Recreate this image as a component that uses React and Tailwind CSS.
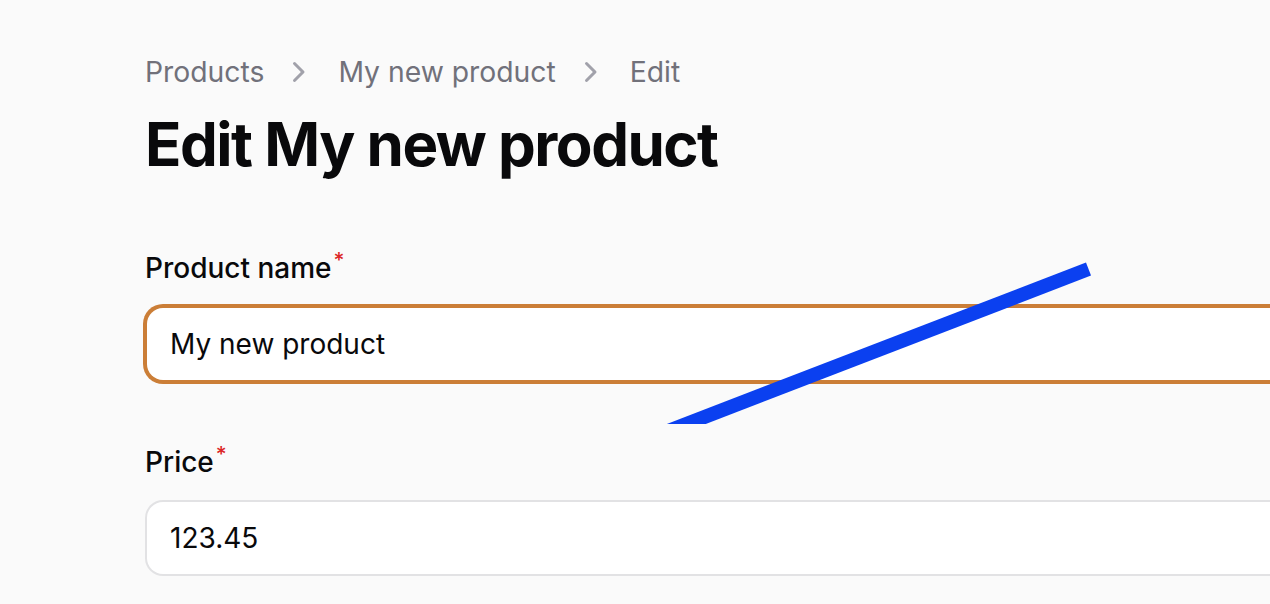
import React from 'react';

function Chevron() {
  return (
    <svg viewBox="0 0 20 20" fill="currentColor" className="w-[40px] h-[40px] ml-[13px] mr-[21px] text-[#a1a1aa]">
      <path
        fillRule="evenodd"
        clipRule="evenodd"
        d="M8.22 5.22a.75.75 0 0 1 1.06 0l4.25 4.25a.75.75 0 0 1 0 1.06l-4.25 4.25a.75.75 0 0 1-1.06-1.06L11.94 10 8.22 6.28a.75.75 0 0 1 0-1.06Z"
      />
    </svg>
  );
}

function Field({ label, value, focused }) {
  return (
    <div className="flex flex-col gap-[16px]">
      <label className="text-[28px] leading-[48px] font-medium text-[#09090b]">
        {label}
        <sup className="text-[#dc2626] font-medium ml-[2px]">*</sup>
      </label>
      <div
        className={
          focused
            ? 'ml-[2px] w-[1200px] h-[72px] bg-white rounded-[16px] shadow-[0_0_0_4px_#cb7e37] flex items-center px-[24px]'
            : 'ml-[2px] w-[1200px] h-[72px] bg-white rounded-[16px] shadow-[0_0_0_2px_#e2e2e4] flex items-center px-[24px]'
        }
      >
        <input
          readOnly
          value={value}
          className="w-full bg-transparent outline-none text-[28px] text-[#09090b] -ml-[1px]"
        />
      </div>
    </div>
  );
}

export default function App() {
  return (
    <div
      className="relative w-[1270px] h-[604px] overflow-hidden bg-[#fafafa]"
      style={{ fontFamily: 'Inter, "Noto Sans", sans-serif' }}
    >
      <div className="pl-[145px] pt-[52px]">
        <nav className="flex items-center text-[28.3px] leading-[40px] text-[#71717a]">
          <span>Products</span>
          <Chevron />
          <span>My new product</span>
          <Chevron />
          <span>Edit</span>
        </nav>
        <h1 className="mt-[16px] text-[60px] leading-[72px] font-bold tracking-tight text-[#09090b]">
          Edit My new product
        </h1>

        <div className="mt-[64px] flex flex-col gap-[58px]">
          <Field label="Product name" value="My new product" focused />
          <Field label="Price" value="123.45" />
        </div>
      </div>

      {/* annotation stroke over the form */}
      <svg className="absolute left-0 top-0 pointer-events-none" width="1270" height="424" viewBox="0 0 1270 424">
        <line x1="1088.5" y1="269" x2="650" y2="438" stroke="#0b40f0" strokeWidth="14" />
      </svg>
    </div>
  );
}
